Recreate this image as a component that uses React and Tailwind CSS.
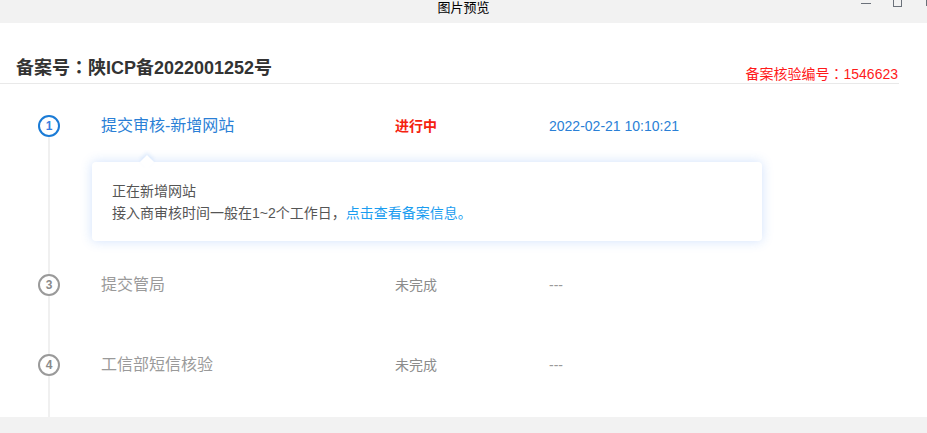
import React from 'react';

const font = { fontFamily: '"Liberation Sans", "Noto Sans CJK SC", sans-serif' };
const colonFont = { fontFamily: '"Noto Sans CJK JP", sans-serif' };

const steps = [
    { no: 1, title: '提交审核-新增网站', status: '进行中', time: '2022-02-21 10:10:21', active: true },
    { no: 3, title: '提交管局', status: '未完成', time: '---' },
    { no: 4, title: '工信部短信核验', status: '未完成', time: '---' },
];

const StepRow = ({ step }) => (
    <div className="relative flex items-center h-[40px]">
        <div className="w-[101px] shrink-0 pl-[38px]">
            <div
                className={`w-[22px] h-[22px] rounded-full border-2 bg-white flex items-center justify-center text-[12px] font-bold ${
                    step.active ? 'border-[#1a7bd6] text-[#3a7ee0]' : 'border-[#9a9a9a] text-[#8a8a8a]'
                }`}
            >
                {step.no}
            </div>
        </div>
        <div className={`w-[294px] shrink-0 text-[16px] ${step.active ? 'text-[#2a7fd6]' : 'text-[#9a9a9a]'}`}>
            {step.title}
        </div>
        <div className={`w-[154px] shrink-0 text-[14px] ${step.active ? 'text-[#f5220f] font-bold' : 'text-[#8c8c8c]'}`}>
            {step.status}
        </div>
        <div className={`text-[14px] ${step.active ? 'text-[#2a7fd6]' : 'text-[#9a9a9a]'}`}>{step.time}</div>
    </div>
);

const App = () => {
    return (
        <div className="w-[927px] h-[433px] bg-white flex flex-col overflow-hidden" style={font}>
            {/* window title bar */}
            <div className="relative h-[23px] bg-[#f2f2f2] shrink-0 flex items-start justify-center">
                <span className="text-[13px] leading-[16px] text-black">图片预览</span>
                <div className="absolute right-0 top-0 flex items-start">
                    <span className="block w-[10px] h-px bg-[#6b717a] mt-[3px] mr-[22px]" />
                    <span className="block w-[9px] h-[7px] border border-t-0 border-[#6b717a] mr-[24px]" />
                    <span className="block w-px h-[6px] bg-[#6b717a]" />
                </div>
            </div>

            {/* content */}
            <div className="flex-1 flex flex-col">
                <div className="w-[899px] h-[61px] border-b border-[#e9e9e9] flex justify-between items-start pl-[16px] pr-[1px] shrink-0">
                    <h1 className="mt-[31px] text-[18px] leading-[24px] font-bold text-[#333]">
                        备案号<span style={colonFont}>：</span>陕ICP备2022001252号
                    </h1>
                    <div className="mt-[41px] text-[14px] leading-[18px] text-[#ff1a1a]">
                        备案核验编号<span style={colonFont}>：</span>1546623
                    </div>
                </div>

                <div className="relative flex-1 pt-[22px]">
                    <div className="absolute left-[48px] top-[42px] bottom-0 w-[2px] bg-[#f0f0f0]" />

                    <StepRow step={steps[0]} />

                    <div className="relative ml-[92px] mt-[16px] w-[670px] h-[79px] bg-white rounded-[4px] shadow-[0_0_12px_rgba(40,120,240,0.22)] pl-[20px] pt-[18px] text-[14px] leading-[22px] text-[#555]">
                        <div className="absolute left-[50px] -top-[5px] w-[10px] h-[10px] bg-white rotate-45 shadow-[-2px_-2px_4px_rgba(40,120,240,0.12)]" />
                        <div className="relative">正在新增网站</div>
                        <div className="relative">
                            接入商审核时间一般在1~2个工作日，<span className="text-[#1a9df0]">点击查看备案信息。</span>
                        </div>
                    </div>

                    <div className="mt-[24px]">
                        <StepRow step={steps[1]} />
                    </div>
                    <div className="mt-[40px]">
                        <StepRow step={steps[2]} />
                    </div>
                </div>
            </div>

            <div className="h-[16px] bg-[#f2f2f2] shrink-0" />
        </div>
    );
};

export default App;
